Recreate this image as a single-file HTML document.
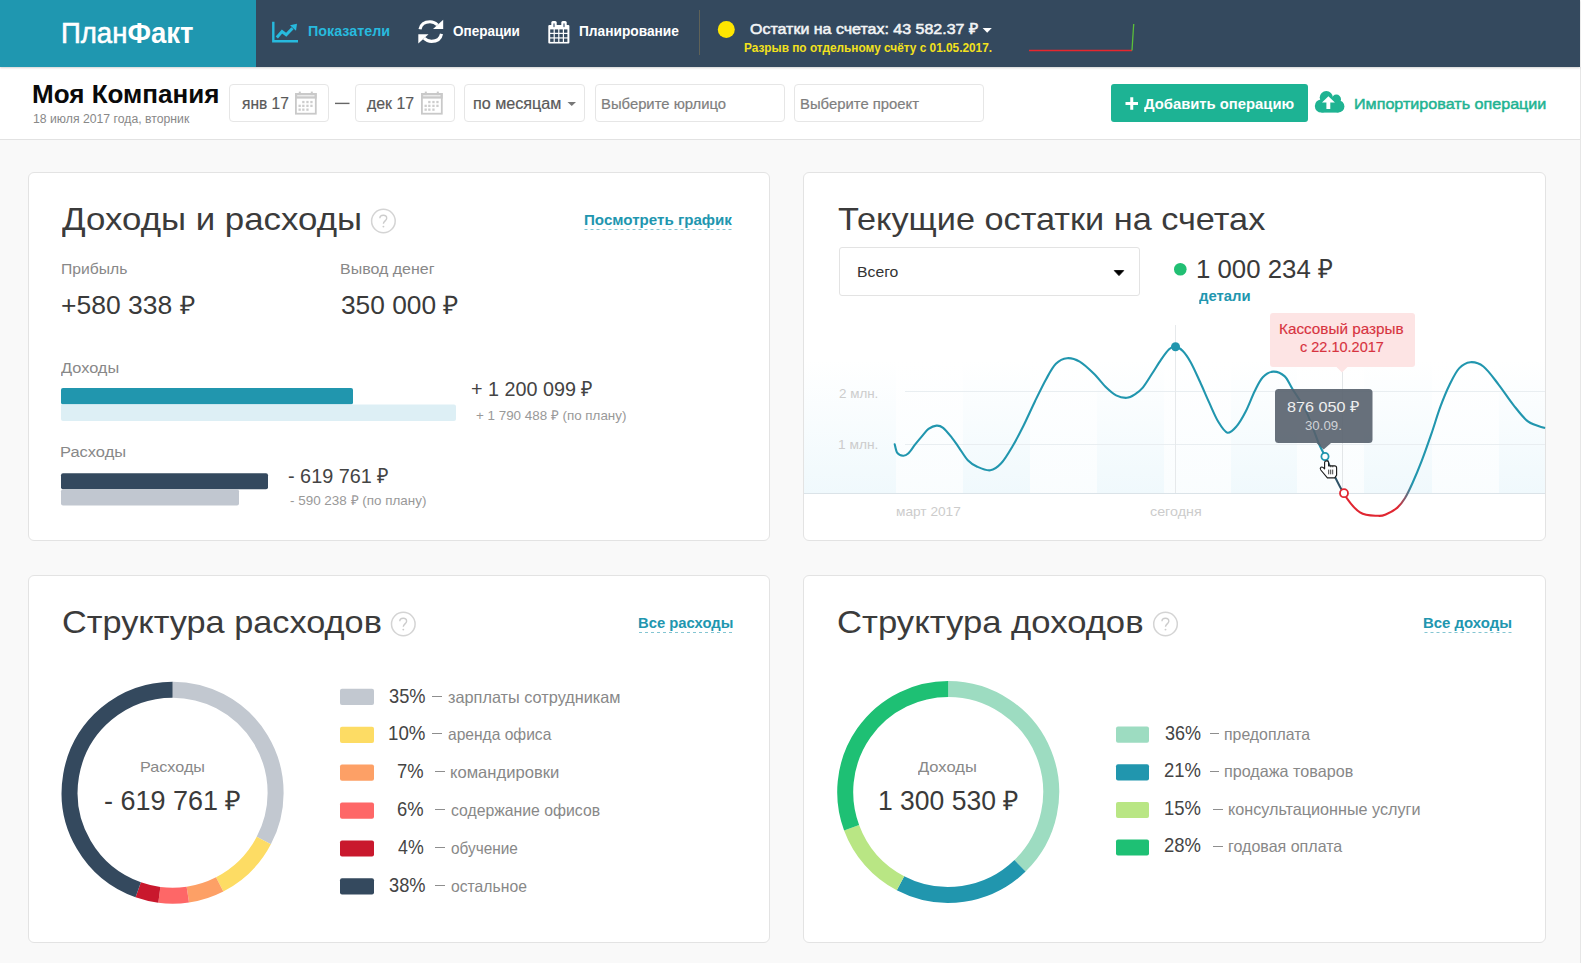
<!DOCTYPE html>
<html lang="ru">
<head>
<meta charset="utf-8">
<title>ПланФакт — Показатели</title>
<style>
*{box-sizing:border-box;margin:0;padding:0}
html,body{width:1581px;height:963px;overflow:hidden}
body{background:#f9f9f9;font-family:"Liberation Sans",sans-serif;position:relative}
.t{position:absolute;white-space:nowrap;line-height:0;transform-origin:0 0;font-family:"Liberation Sans",sans-serif}
.abs{position:absolute}
.header{position:absolute;left:0;top:0;width:1580px;height:67px;background:#34495e;box-shadow:0 1px 2px rgba(0,0,0,.18);z-index:2}
.logo{position:absolute;left:0;top:0;width:256px;height:67px;background:#1f97b0}
.sub{position:absolute;left:0;top:67px;width:1580px;height:73px;background:#fff;border-bottom:1px solid #e2e2e2}
.box{position:absolute;top:84px;height:38px;background:#fff;border:1px solid #e6e6e6;border-radius:4px}
.btn{position:absolute;left:1111px;top:84px;width:197px;height:38px;background:#1db394;border-radius:3px}
.card{position:absolute;background:#fff;border:1px solid #e3e3e3;border-radius:6px}
.rline{position:absolute;left:1580px;top:67px;width:1px;height:896px;background:#e6e6e6}
svg{position:absolute;left:0;top:0;overflow:visible}
</style>
</head>
<body>
<div class="header"><div class="logo"></div></div>
<div class="sub"></div>
<div class="rline"></div>

<div class="box" style="left:229px;width:100px"></div>
<div class="box" style="left:355px;width:100px"></div>
<div class="box" style="left:464px;width:121px"></div>
<div class="box" style="left:595px;width:190px"></div>
<div class="box" style="left:794px;width:190px"></div>
<div class="btn"></div>

<div class="card" style="left:28px;top:172px;width:742px;height:369px"></div>
<div class="card" style="left:803px;top:172px;width:743px;height:369px"></div>
<div class="card" style="left:28px;top:575px;width:742px;height:368px"></div>
<div class="card" style="left:803px;top:575px;width:743px;height:368px"></div>

<!-- select in card 2 -->
<div class="abs" style="left:839px;top:247px;width:301px;height:49px;border:1px solid #e3e3e3;border-radius:3px;background:#fff"></div>

<svg width="1581" height="963" viewBox="0 0 1581 963" style="z-index:3">
<defs>
  <linearGradient id="bandA" x1="0" y1="0" x2="0" y2="1">
    <stop offset="0" stop-color="#e6f5fb" stop-opacity="0"/>
    <stop offset="1" stop-color="#e6f5fb" stop-opacity="0.6"/>
  </linearGradient>
  <linearGradient id="bandB" x1="0" y1="0" x2="0" y2="1">
    <stop offset="0" stop-color="#e6f5fb" stop-opacity="0"/>
    <stop offset="1" stop-color="#e6f5fb" stop-opacity="0.22"/>
  </linearGradient>
  <linearGradient id="lineGrad" gradientUnits="userSpaceOnUse" x1="880" y1="0" x2="1560" y2="0">
    <stop offset="0" stop-color="#2196ae"/>
    <stop offset="0.6537" stop-color="#2196ae"/>
    <stop offset="0.6559" stop-color="#2a5e74"/>
    <stop offset="0.6809" stop-color="#2f4d62"/>
    <stop offset="0.6838" stop-color="#e02631"/>
    <stop offset="0.7618" stop-color="#e02631"/>
    <stop offset="0.7824" stop-color="#2196ae"/>
    <stop offset="1" stop-color="#2196ae"/>
  </linearGradient>
  <clipPath id="cTeal1"><rect x="880" y="300" width="445" height="240"/></clipPath>
  <clipPath id="cNavy"><rect x="1325" y="300" width="19" height="240"/></clipPath>
  <clipPath id="cRed"><rect x="1344" y="300" width="61" height="240"/></clipPath>
  <clipPath id="cTeal2"><rect x="1405" y="300" width="160" height="240"/></clipPath>
</defs>

<!-- ===== header icons ===== -->
<!-- chart icon -->
<g fill="none" stroke="#27bade">
  <path d="M273.3,21.8 V41.2 H298" stroke-width="2.4"/>
  <path d="M276.8,37.4 L282,31.5 L286.2,34.8 L292.5,28.2" stroke-width="3"/>
</g>
<path d="M290,25.2 L297,23.8 L296,30.8 Z" fill="#27bade"/>
<!-- refresh icon -->
<g fill="none" stroke="#fff" stroke-width="3.1">
  <path d="M420,29.3 C421,24 425,21.8 430,21.8 C433,21.8 435.5,23 437.5,25"/>
  <path d="M441.5,33.9 C440.5,39.2 436.5,41.4 431.5,41.4 C428.5,41.4 426,40.2 424,38.2"/>
</g>
<path d="M433,29 L443.2,29 L443.2,19.8 Z" fill="#fff"/>
<path d="M428.5,34.2 L418.3,34.2 L418.3,43.4 Z" fill="#fff"/>
<!-- calendar icon -->
<rect x="548.3" y="25" width="21.1" height="18.6" rx="1" fill="#fff"/>
<rect x="551.3" y="21" width="5.4" height="7.5" rx="1.5" fill="#fff"/>
<rect x="561.3" y="21" width="5.4" height="7.5" rx="1.5" fill="#fff"/>
<rect x="553" y="23.2" width="2" height="4" rx="0.8" fill="#8d9aab"/>
<rect x="563" y="23.2" width="2" height="4" rx="0.8" fill="#8d9aab"/>
<g fill="#34495e">
  <rect x="550.2" y="29.4" width="3.4" height="3.37"/><rect x="554.8" y="29.4" width="3.4" height="3.37"/><rect x="559.4" y="29.4" width="3.4" height="3.37"/><rect x="564" y="29.4" width="3.4" height="3.37"/>
  <rect x="550.2" y="33.97" width="3.4" height="3.37"/><rect x="554.8" y="33.97" width="3.4" height="3.37"/><rect x="559.4" y="33.97" width="3.4" height="3.37"/><rect x="564" y="33.97" width="3.4" height="3.37"/>
  <rect x="550.2" y="38.54" width="3.4" height="3.37"/><rect x="554.8" y="38.54" width="3.4" height="3.37"/><rect x="559.4" y="38.54" width="3.4" height="3.37"/><rect x="564" y="38.54" width="3.4" height="3.37"/>
</g>
<!-- divider -->
<rect x="699" y="10" width="1" height="45" fill="#5f6258"/>
<!-- yellow dot -->
<circle cx="726.3" cy="29.5" r="8.5" fill="#ffe600"/>
<!-- white caret -->
<path d="M982.6,28 H991.8 L987.2,32.8 Z" fill="#fff"/>
<!-- sparkline -->
<path d="M1029,50.5 H1132" stroke="#e8262e" stroke-width="1.6" fill="none"/>
<path d="M1132,50.5 L1133.7,24" stroke="#5bbf3a" stroke-width="1.3" fill="none"/>

<!-- ===== subheader icons ===== -->
<rect x="295.9" y="93.9" width="19.9" height="19.8" fill="none" stroke="#c9c9c9" stroke-width="1.8"/>
<rect x="295.0" y="93" width="21.7" height="5.6" fill="#c9c9c9"/>
<rect x="297.2" y="95.1" width="17.3" height="1.3" fill="#efefef"/>
<rect x="298.8" y="91.6" width="2" height="3.5" fill="#c9c9c9"/><rect x="310.8" y="91.6" width="2" height="3.5" fill="#c9c9c9"/>
<rect x="302.2" y="100.9" width="2.3" height="2.3" fill="#cdcdcd"/><rect x="306.3" y="100.9" width="2.3" height="2.3" fill="#cdcdcd"/><rect x="310.3" y="100.9" width="2.3" height="2.3" fill="#cdcdcd"/><rect x="298.5" y="104.7" width="2.3" height="2.3" fill="#cdcdcd"/><rect x="302.2" y="104.7" width="2.3" height="2.3" fill="#cdcdcd"/><rect x="306.3" y="104.7" width="2.3" height="2.3" fill="#cdcdcd"/><rect x="310.3" y="104.7" width="2.3" height="2.3" fill="#cdcdcd"/><rect x="298.5" y="108.5" width="2.3" height="2.3" fill="#cdcdcd"/><rect x="302.2" y="108.5" width="2.3" height="2.3" fill="#cdcdcd"/><rect x="306.3" y="108.5" width="2.3" height="2.3" fill="#cdcdcd"/>
<rect x="421.9" y="93.9" width="19.9" height="19.8" fill="none" stroke="#c9c9c9" stroke-width="1.8"/>
<rect x="421.0" y="93" width="21.7" height="5.6" fill="#c9c9c9"/>
<rect x="423.2" y="95.1" width="17.3" height="1.3" fill="#efefef"/>
<rect x="424.8" y="91.6" width="2" height="3.5" fill="#c9c9c9"/><rect x="436.8" y="91.6" width="2" height="3.5" fill="#c9c9c9"/>
<rect x="428.2" y="100.9" width="2.3" height="2.3" fill="#cdcdcd"/><rect x="432.3" y="100.9" width="2.3" height="2.3" fill="#cdcdcd"/><rect x="436.3" y="100.9" width="2.3" height="2.3" fill="#cdcdcd"/><rect x="424.5" y="104.7" width="2.3" height="2.3" fill="#cdcdcd"/><rect x="428.2" y="104.7" width="2.3" height="2.3" fill="#cdcdcd"/><rect x="432.3" y="104.7" width="2.3" height="2.3" fill="#cdcdcd"/><rect x="436.3" y="104.7" width="2.3" height="2.3" fill="#cdcdcd"/><rect x="424.5" y="108.5" width="2.3" height="2.3" fill="#cdcdcd"/><rect x="428.2" y="108.5" width="2.3" height="2.3" fill="#cdcdcd"/><rect x="432.3" y="108.5" width="2.3" height="2.3" fill="#cdcdcd"/>
<!-- dash between dates -->
<rect x="335" y="102.7" width="14.5" height="1.4" fill="#666"/>
<!-- caret по месяцам -->
<path d="M567.5,102 H576 L571.75,106 Z" fill="#777"/>
<!-- plus in button -->
<path d="M1125.5,103.5 H1138 M1131.75,97.2 V109.8" stroke="#fff" stroke-width="3" fill="none"/>
<!-- cloud upload -->
<g fill="#1fb392">
  <circle cx="1326.3" cy="97.6" r="6.6"/>
  <circle cx="1336.4" cy="99.2" r="4.6"/>
  <circle cx="1321.4" cy="106" r="6.6"/>
  <circle cx="1338.3" cy="106.4" r="6.1"/>
  <rect x="1321.4" y="100" width="17" height="12.6"/>
</g>
<path d="M1328.4,96.2 L1334.9,102.6 H1330.3 V108.9 H1326.4 V102.6 H1322 Z" fill="#fff"/>
<!-- ===== card 1 ===== -->
<g transform="translate(0.0,0)"><circle cx="383.4" cy="221" r="11.8" fill="none" stroke="#d4d4d4" stroke-width="1.5"/>
<path d="M379.9,218.3 C379.9,216.2 381.5,215.3 383.3,215.3 C385.3,215.3 386.7,216.5 386.7,218.2 C386.7,220.6 383.4,221.2 383.4,223.8" fill="none" stroke="#cccccc" stroke-width="1.4"/>
<circle cx="383.4" cy="226.6" r="0.95" fill="#cccccc"/></g>
<path d="M584.5,229.5 H732.5" stroke="#2196af" stroke-width="1" stroke-dasharray="3,3" opacity="0.55"/>
<rect x="61" y="388" width="292" height="16.5" rx="2" fill="#2196ae"/>
<rect x="61" y="404.5" width="395" height="16.5" rx="2" fill="#ddeff5"/>
<rect x="61" y="404.5" width="291.5" height="2" fill="#ddeff5"/>
<rect x="61" y="473.3" width="207" height="16" rx="2" fill="#34495e"/>
<rect x="61" y="489.3" width="178" height="16.3" rx="2" fill="#c1c7d0"/>

<!-- ===== card 2 chart ===== -->
<path d="M1114.3,270.6 H1123.7 L1119,275.6 Z" fill="#000" stroke="#000" stroke-width="0.9" stroke-linejoin="round"/>
<circle cx="1180.3" cy="269.2" r="6.3" fill="#21bf73"/>
<path d="M1199,305.5 H1250.5" stroke="#2196af" stroke-width="1" stroke-dasharray="3,3" opacity="0"/>
<!-- bands -->
<g>
  <rect x="804" y="360" width="92" height="133" fill="url(#bandA)"/>
  <rect x="896" y="360" width="67" height="133" fill="url(#bandB)"/>
  <rect x="963" y="360" width="67" height="133" fill="url(#bandA)"/>
  <rect x="1030" y="360" width="67" height="133" fill="url(#bandB)"/>
  <rect x="1097" y="360" width="67" height="133" fill="url(#bandA)"/>
  <rect x="1164" y="360" width="67" height="133" fill="url(#bandB)"/>
  <rect x="1231" y="360" width="66" height="133" fill="url(#bandA)"/>
  <rect x="1297" y="360" width="67" height="133" fill="url(#bandB)"/>
  <rect x="1364" y="360" width="68" height="133" fill="url(#bandA)"/>
  <rect x="1432" y="360" width="67" height="133" fill="url(#bandB)"/>
  <rect x="1499" y="360" width="46" height="133" fill="url(#bandA)"/>
</g>
<path d="M905,391.5 H1545 M905,444.5 H1545" stroke="#e9eef1" stroke-width="1"/>
<path d="M804,493.5 H1545" stroke="#dbe3e8" stroke-width="1"/>
<path d="M1175.5,325 V493" stroke="#e6e9eb" stroke-width="1"/>
<path d="M1342.5,372 V493" stroke="#e3e6e8" stroke-width="1"/>
<!-- curve -->
<path fill="none" stroke-width="2.1" stroke-linecap="round" stroke="url(#lineGrad)" d="M894.70,444.20 C895.13,445.65 895.90,450.97 897.30,452.90 C898.70,454.83 901.28,455.68 903.10,455.80 C904.92,455.92 906.15,455.53 908.20,453.60 C910.25,451.67 912.98,447.23 915.40,444.20 C917.82,441.17 920.52,437.95 922.70,435.40 C924.88,432.85 926.20,430.53 928.50,428.90 C930.80,427.27 934.07,425.78 936.50,425.60 C938.93,425.42 940.55,425.80 943.10,427.80 C945.65,429.80 949.13,434.27 951.80,437.60 C954.47,440.93 956.43,444.03 959.10,447.80 C961.77,451.57 964.78,457.05 967.80,460.20 C970.82,463.35 973.45,465.02 977.20,466.70 C980.95,468.38 986.30,470.87 990.30,470.30 C994.30,469.73 997.52,467.27 1001.20,463.30 C1004.88,459.33 1008.67,452.80 1012.40,446.50 C1016.13,440.20 1019.87,432.97 1023.60,425.50 C1027.33,418.03 1031.05,409.42 1034.80,401.70 C1038.55,393.98 1042.58,385.52 1046.10,379.20 C1049.62,372.88 1052.40,367.30 1055.90,363.80 C1059.40,360.30 1063.13,358.55 1067.10,358.20 C1071.07,357.85 1075.27,359.13 1079.70,361.70 C1084.13,364.27 1089.27,369.28 1093.70,373.60 C1098.13,377.92 1102.57,383.97 1106.30,387.60 C1110.03,391.23 1112.67,393.70 1116.10,395.40 C1119.53,397.10 1123.77,397.97 1126.90,397.80 C1130.03,397.63 1132.25,396.10 1134.90,394.40 C1137.55,392.70 1139.95,391.03 1142.80,387.60 C1145.65,384.17 1148.95,378.47 1152.00,373.80 C1155.05,369.13 1158.25,363.68 1161.10,359.60 C1163.95,355.52 1166.72,351.47 1169.10,349.30 C1171.48,347.13 1173.12,346.32 1175.40,346.60 C1177.68,346.88 1180.23,348.37 1182.80,351.00 C1185.37,353.63 1187.93,357.27 1190.80,362.40 C1193.67,367.53 1196.95,375.13 1200.00,381.80 C1203.05,388.47 1206.05,395.73 1209.10,402.40 C1212.15,409.07 1215.25,416.75 1218.30,421.80 C1221.35,426.85 1224.37,431.93 1227.40,432.70 C1230.43,433.47 1233.45,429.93 1236.50,426.40 C1239.55,422.87 1242.65,417.40 1245.70,411.50 C1248.75,405.60 1251.95,396.70 1254.80,391.00 C1257.65,385.30 1259.75,380.53 1262.80,377.30 C1265.85,374.07 1269.48,371.80 1273.10,371.60 C1276.72,371.40 1281.27,373.20 1284.50,376.10 C1287.73,379.00 1288.88,383.12 1292.50,389.00 C1296.12,394.88 1301.92,402.57 1306.20,411.40 C1310.48,420.23 1315.05,434.53 1318.20,442.00 C1321.35,449.47 1320.87,447.67 1325.10,456.20 C1329.33,464.73 1337.78,483.83 1343.60,493.20 C1349.42,502.57 1354.23,508.63 1360.00,512.40 C1365.77,516.17 1373.83,515.50 1378.20,515.80 C1382.57,516.10 1383.00,515.57 1386.20,514.20 C1389.40,512.83 1394.28,510.25 1397.40,507.60 C1400.52,504.95 1402.40,502.35 1404.90,498.30 C1407.40,494.25 1409.60,489.53 1412.40,483.30 C1415.20,477.07 1418.58,469.00 1421.70,460.90 C1424.82,452.80 1427.98,443.73 1431.10,434.70 C1434.22,425.67 1437.28,415.10 1440.40,406.70 C1443.52,398.30 1446.68,390.68 1449.80,384.30 C1452.92,377.92 1455.68,372.08 1459.10,368.40 C1462.52,364.72 1466.25,362.52 1470.30,362.20 C1474.35,361.88 1478.72,362.82 1483.40,366.50 C1488.08,370.18 1493.42,377.92 1498.40,384.30 C1503.38,390.68 1508.32,398.57 1513.30,404.80 C1518.28,411.03 1523.15,417.87 1528.30,421.70 C1533.45,425.53 1541.55,426.78 1544.20,427.80"/>
<circle cx="1175.5" cy="346.8" r="4.5" fill="#2196ae"/>
<circle cx="1325" cy="456.5" r="3.6" fill="#fff" stroke="#2196ae" stroke-width="1.8"/>
<circle cx="1344" cy="493.2" r="4" fill="#fff" stroke="#e02631" stroke-width="1.8"/>
<!-- red tooltip -->
<rect x="1270" y="313" width="145" height="54" rx="3" fill="#fde4e4"/>
<path d="M1336,366.5 L1342,372.5 L1348,366.5 Z" fill="#fde4e4"/>
<!-- dark tooltip -->
<rect x="1275" y="389" width="97.5" height="54" rx="3.5" fill="#56606d" fill-opacity="0.9"/>
<path d="M1316.5,443 L1323.7,449.5 L1331,443 Z" fill="#56606d" fill-opacity="0.9"/>
<!-- hand cursor -->
<path d="M1324.6,462.5 Q1324.6,460.8 1326.6,460.8 Q1328.6,460.8 1328.6,462.5 V465.8 L1334.6,465.8 Q1336.6,465.8 1336.6,467.8 V475.2 L1334.8,477.8 H1327.4 L1320.8,470 Q1319.6,468.3 1321,467.2 Q1322.5,466.3 1324.6,468.8 Z" fill="#fff" stroke="#1c1c1c" stroke-width="1.15" stroke-linejoin="round"/>
<path d="M1328.7,469.6 V474.3 M1330.7,469.6 V474.3 M1332.7,469.6 V474.3 M1330.8,465.9 V467.3 M1332.8,465.9 V467.3" stroke="#222" stroke-width="0.85"/>

<!-- ===== card 3 ===== -->
<g transform="translate(19.900000000000034,403)"><circle cx="383.4" cy="221" r="11.8" fill="none" stroke="#d4d4d4" stroke-width="1.5"/>
<path d="M379.9,218.3 C379.9,216.2 381.5,215.3 383.3,215.3 C385.3,215.3 386.7,216.5 386.7,218.2 C386.7,220.6 383.4,221.2 383.4,223.8" fill="none" stroke="#cccccc" stroke-width="1.4"/>
<circle cx="383.4" cy="226.6" r="0.95" fill="#cccccc"/></g>
<path d="M639,632.5 H732.5" stroke="#2196af" stroke-width="1" stroke-dasharray="3,3" opacity="0.55"/>
<path d="M172.60,689.70 A103,103 0 0 1 263.80,840.58" fill="none" stroke="#c2c8d0" stroke-width="16"/>
<path d="M263.80,840.58 A103,103 0 0 1 219.68,884.31" fill="none" stroke="#fddc64" stroke-width="16"/>
<path d="M219.68,884.31 A103,103 0 0 1 187.82,894.57" fill="none" stroke="#fda066" stroke-width="16"/>
<path d="M187.82,894.57 A103,103 0 0 1 159.33,894.84" fill="none" stroke="#fe6767" stroke-width="16"/>
<path d="M159.33,894.84 A103,103 0 0 1 138.22,889.79" fill="none" stroke="#c9182d" stroke-width="16"/>
<path d="M138.22,889.79 A103,103 0 0 1 172.60,689.70" fill="none" stroke="#34495e" stroke-width="16"/>
<g>
  <rect x="340" y="688.8" width="34" height="16.2" rx="2" fill="#c2c8d0"/>
  <rect x="340" y="726.7" width="34" height="16.2" rx="2" fill="#fddc64"/>
  <rect x="340" y="764.6" width="34" height="16.2" rx="2" fill="#fda066"/>
  <rect x="340" y="802.5" width="34" height="16.2" rx="2" fill="#fe6767"/>
  <rect x="340" y="840.4" width="34" height="16.2" rx="2" fill="#c9182d"/>
  <rect x="340" y="878.3" width="34" height="16.2" rx="2" fill="#34495e"/>
</g>

<!-- ===== card 4 ===== -->
<g transform="translate(782.1,403)"><circle cx="383.4" cy="221" r="11.8" fill="none" stroke="#d4d4d4" stroke-width="1.5"/>
<path d="M379.9,218.3 C379.9,216.2 381.5,215.3 383.3,215.3 C385.3,215.3 386.7,216.5 386.7,218.2 C386.7,220.6 383.4,221.2 383.4,223.8" fill="none" stroke="#cccccc" stroke-width="1.4"/>
<circle cx="383.4" cy="226.6" r="0.95" fill="#cccccc"/></g>
<path d="M1424.5,632.5 H1512" stroke="#2196af" stroke-width="1" stroke-dasharray="3,3" opacity="0.55"/>
<path d="M948.20,689.00 A103,103 0 0 1 1020.01,865.84" fill="none" stroke="#9ddcc1" stroke-width="16"/>
<path d="M1020.01,865.84 A103,103 0 0 1 900.48,883.28" fill="none" stroke="#2196ae" stroke-width="16"/>
<path d="M900.48,883.28 A103,103 0 0 1 851.60,827.73" fill="none" stroke="#b9e684" stroke-width="16"/>
<path d="M851.60,827.73 A103,103 0 0 1 948.20,689.00" fill="none" stroke="#1ec074" stroke-width="16"/>
<g>
  <rect x="1116" y="726.6" width="33" height="16.2" rx="2" fill="#9ddcc1"/>
  <rect x="1116" y="764.3" width="33" height="16.2" rx="2" fill="#2196ae"/>
  <rect x="1116" y="801.9" width="33" height="16.2" rx="2" fill="#b9e684"/>
  <rect x="1116" y="839.4" width="33" height="16.2" rx="2" fill="#1ec074"/>
</g>
</svg>

<div style="position:absolute;left:0;top:0;z-index:4">
<span class="t" style="left:307.84px;top:30.50px;font-size:15px;color:#27bade;transform:scaleX(0.9553);font-weight:bold;">Показатели</span>
<span class="t" style="left:453.30px;top:30.50px;font-size:15px;color:#ffffff;transform:scaleX(0.9011);font-weight:bold;">Операции</span>
<span class="t" style="left:578.89px;top:30.50px;font-size:15px;color:#ffffff;transform:scaleX(0.9147);font-weight:bold;">Планирование</span>
<span class="t" style="left:749.50px;top:28.50px;font-size:15.5px;color:#f2f4f6;transform:scaleX(1.0313);-webkit-text-stroke:0.55px #f2f4f6;">Остатки на счетах: 43 582.37 ₽</span>
<span class="t" style="left:744.00px;top:48.00px;font-size:12.5px;color:#f3e11c;transform:scaleX(0.9464);font-weight:bold;">Разрыв по отдельному счёту с 01.05.2017.</span>
<span class="t" style="left:32.32px;top:94.00px;font-size:26.5px;color:#0a0a0a;transform:scaleX(0.9820);font-weight:bold;">Моя Компания</span>
<span class="t" style="left:33.00px;top:119.00px;font-size:12.5px;color:#888888;transform:scaleX(0.9790);">18 июля 2017 года, вторник</span>
<span class="t" style="left:241.60px;top:103.50px;font-size:16px;color:#595959;transform:scaleX(0.9701);-webkit-text-stroke:0.2px #595959;">янв 17</span>
<span class="t" style="left:367.10px;top:103.50px;font-size:16px;color:#595959;transform:scaleX(0.9900);-webkit-text-stroke:0.2px #595959;">дек 17</span>
<span class="t" style="left:472.59px;top:103.50px;font-size:16px;color:#595959;transform:scaleX(1.0090);-webkit-text-stroke:0.2px #595959;">по месяцам</span>
<span class="t" style="left:600.71px;top:103.50px;font-size:15px;color:#7e7e7e;transform:scaleX(0.9887);-webkit-text-stroke:0.2px #7e7e7e;">Выберите юрлицо</span>
<span class="t" style="left:799.61px;top:103.50px;font-size:15px;color:#7e7e7e;transform:scaleX(0.9902);-webkit-text-stroke:0.2px #7e7e7e;">Выберите проект</span>
<span class="t" style="left:1143.60px;top:103.50px;font-size:15.5px;color:#ffffff;transform:scaleX(0.9549);font-weight:bold;">Добавить операцию</span>
<span class="t" style="left:1353.56px;top:103.50px;font-size:15.5px;color:#1fb392;transform:scaleX(1.0397);-webkit-text-stroke:0.5px #1fb392;">Импортировать операции</span>
<span class="t" style="left:62.30px;top:219.00px;font-size:32px;color:#3b3b3b;transform:scaleX(1.0891);">Доходы и расходы</span>
<span class="t" style="left:583.59px;top:219.50px;font-size:15px;color:#2196af;transform:scaleX(1.0078);font-weight:bold;">Посмотреть график</span>
<span class="t" style="left:60.99px;top:268.50px;font-size:15.5px;color:#888888;transform:scaleX(1.0127);">Прибыль</span>
<span class="t" style="left:339.87px;top:268.50px;font-size:15.5px;color:#888888;transform:scaleX(1.0306);">Вывод денег</span>
<span class="t" style="left:60.96px;top:305.00px;font-size:25.5px;color:#3a3a3a;transform:scaleX(1.0381);">+580 338 ₽</span>
<span class="t" style="left:341.00px;top:305.00px;font-size:25.5px;color:#3a3a3a;transform:scaleX(1.0312);">350 000 ₽</span>
<span class="t" style="left:61.40px;top:367.50px;font-size:15.5px;color:#888888;transform:scaleX(1.0542);">Доходы</span>
<span class="t" style="left:471.06px;top:388.50px;font-size:21px;color:#444444;transform:scaleX(0.9404);">+ 1 200 099 ₽</span>
<span class="t" style="left:475.80px;top:415.50px;font-size:13.5px;color:#999999;transform:scaleX(0.9917);">+ 1 790 488 ₽ (по плану)</span>
<span class="t" style="left:59.94px;top:451.50px;font-size:15.5px;color:#888888;transform:scaleX(1.0623);">Расходы</span>
<span class="t" style="left:288.30px;top:475.50px;font-size:21px;color:#444444;transform:scaleX(0.9440);">- 619 761 ₽</span>
<span class="t" style="left:289.80px;top:500.50px;font-size:13.5px;color:#999999;transform:scaleX(0.9955);">- 590 238 ₽ (по плану)</span>
<span class="t" style="left:838.00px;top:219.00px;font-size:32px;color:#3b3b3b;transform:scaleX(1.0712);">Текущие остатки на счетах</span>
<span class="t" style="left:856.68px;top:271.50px;font-size:15.5px;color:#333333;transform:scaleX(1.0174);">Всего</span>
<span class="t" style="left:1196.35px;top:269.00px;font-size:26.5px;color:#3a3a3a;transform:scaleX(0.9736);">1 000 234 ₽</span>
<span class="t" style="left:1199.00px;top:295.50px;font-size:15px;color:#2196af;transform:scaleX(0.9907);font-weight:bold;">детали</span>
<span class="t" style="left:839.40px;top:393.50px;font-size:13.5px;color:#cccccc;transform:scaleX(0.9930);">2 млн.</span>
<span class="t" style="left:838.38px;top:444.50px;font-size:13.5px;color:#cccccc;transform:scaleX(1.0192);">1 млн.</span>
<span class="t" style="left:895.50px;top:511.50px;font-size:13.5px;color:#cccccc;transform:scaleX(1.0133);">март 2017</span>
<span class="t" style="left:1149.70px;top:511.50px;font-size:13.5px;color:#cccccc;transform:scaleX(1.0593);">сегодня</span>
<span class="t" style="left:1279.35px;top:329.00px;font-size:14.5px;color:#d7333f;transform:scaleX(1.0528);-webkit-text-stroke:0.15px #d7333f;">Кассовый разрыв</span>
<span class="t" style="left:1300.00px;top:347.00px;font-size:14.5px;color:#d7333f;transform:scaleX(1.0002);-webkit-text-stroke:0.15px #d7333f;">с 22.10.2017</span>
<span class="t" style="left:1287.00px;top:406.50px;font-size:15.5px;color:#eeeeee;transform:scaleX(1.0442);">876 050 ₽</span>
<span class="t" style="left:1304.60px;top:425.50px;font-size:13.5px;color:#cfd2d6;transform:scaleX(0.9814);">30.09.</span>
<span class="t" style="left:62.23px;top:622.00px;font-size:32px;color:#3b3b3b;transform:scaleX(1.0715);">Структура расходов</span>
<span class="t" style="left:637.71px;top:622.50px;font-size:15px;color:#2196af;transform:scaleX(0.9875);font-weight:bold;">Все расходы</span>
<span class="t" style="left:139.98px;top:767.00px;font-size:14.5px;color:#888888;transform:scaleX(1.1162);">Расходы</span>
<span class="t" style="left:104.10px;top:801.00px;font-size:27px;color:#3a3a3a;transform:scaleX(0.9986);">- 619 761 ₽</span>
<span class="t" style="left:388.70px;top:695.50px;font-size:21px;color:#444444;transform:scaleX(0.8680);">35%</span>
<span class="t" style="left:447.50px;top:697.00px;font-size:16.5px;color:#888888;transform:scaleX(0.9868);">зарплаты сотрудникам</span>
<span class="t" style="left:387.81px;top:732.50px;font-size:21px;color:#444444;transform:scaleX(0.8895);">10%</span>
<span class="t" style="left:447.50px;top:734.00px;font-size:16.5px;color:#888888;transform:scaleX(0.9442);">аренда офиса</span>
<span class="t" style="left:397.12px;top:770.50px;font-size:21px;color:#444444;transform:scaleX(0.8752);">7%</span>
<span class="t" style="left:450.29px;top:772.00px;font-size:16.5px;color:#888888;transform:scaleX(1.0056);">командировки</span>
<span class="t" style="left:397.12px;top:808.50px;font-size:21px;color:#444444;transform:scaleX(0.8752);">6%</span>
<span class="t" style="left:451.30px;top:810.00px;font-size:16.5px;color:#888888;transform:scaleX(0.9564);">содержание офисов</span>
<span class="t" style="left:398.00px;top:846.50px;font-size:21px;color:#444444;transform:scaleX(0.8457);">4%</span>
<span class="t" style="left:451.30px;top:848.00px;font-size:16.5px;color:#888888;transform:scaleX(0.9314);">обучение</span>
<span class="t" style="left:388.70px;top:884.50px;font-size:21px;color:#444444;transform:scaleX(0.8680);">38%</span>
<span class="t" style="left:451.30px;top:886.00px;font-size:16.5px;color:#888888;transform:scaleX(0.9524);">остальное</span>
<span class="t" style="left:836.72px;top:622.00px;font-size:32px;color:#3b3b3b;transform:scaleX(1.0832);">Структура доходов</span>
<span class="t" style="left:1423.40px;top:622.50px;font-size:15px;color:#2196af;transform:scaleX(0.9971);font-weight:bold;">Все доходы</span>
<span class="t" style="left:917.70px;top:767.00px;font-size:14.5px;color:#888888;transform:scaleX(1.1392);">Доходы</span>
<span class="t" style="left:878.04px;top:801.00px;font-size:27px;color:#3a3a3a;transform:scaleX(0.9814);">1 300 530 ₽</span>
<span class="t" style="left:1164.50px;top:732.50px;font-size:21px;color:#444444;transform:scaleX(0.8584);">36%</span>
<span class="t" style="left:1224.34px;top:734.00px;font-size:16.5px;color:#888888;transform:scaleX(0.9600);">предоплата</span>
<span class="t" style="left:1163.62px;top:769.50px;font-size:21px;color:#444444;transform:scaleX(0.8796);">21%</span>
<span class="t" style="left:1224.32px;top:771.00px;font-size:16.5px;color:#888888;transform:scaleX(0.9795);">продажа товаров</span>
<span class="t" style="left:1163.62px;top:807.50px;font-size:21px;color:#444444;transform:scaleX(0.8796);">15%</span>
<span class="t" style="left:1227.52px;top:809.00px;font-size:16.5px;color:#888888;transform:scaleX(0.9800);">консультационные услуги</span>
<span class="t" style="left:1163.62px;top:844.50px;font-size:21px;color:#444444;transform:scaleX(0.8796);">28%</span>
<span class="t" style="left:1227.53px;top:846.00px;font-size:16.5px;color:#888888;transform:scaleX(0.9713);">годовая оплата</span>
<span class="t" style="left:60.76px;top:32.50px;font-size:30px;color:#fff;transform:scaleX(0.9179);"><span style="-webkit-text-stroke:0.6px #fff">План</span><b>Факт</b></span>
<div class="abs" style="left:432.2px;top:696px;width:9.8px;height:1.25px;background:#8e8e8e"></div>
<div class="abs" style="left:432.2px;top:733px;width:9.8px;height:1.25px;background:#8e8e8e"></div>
<div class="abs" style="left:435.1px;top:771px;width:9.8px;height:1.25px;background:#8e8e8e"></div>
<div class="abs" style="left:435.1px;top:809px;width:9.8px;height:1.25px;background:#8e8e8e"></div>
<div class="abs" style="left:435.1px;top:847px;width:9.8px;height:1.25px;background:#8e8e8e"></div>
<div class="abs" style="left:435.1px;top:885px;width:9.8px;height:1.25px;background:#8e8e8e"></div>
<div class="abs" style="left:1209.7px;top:733px;width:9.8px;height:1.25px;background:#8e8e8e"></div>
<div class="abs" style="left:1209.7px;top:771px;width:9.8px;height:1.25px;background:#8e8e8e"></div>
<div class="abs" style="left:1212.9px;top:809px;width:9.8px;height:1.25px;background:#8e8e8e"></div>
<div class="abs" style="left:1212.9px;top:846px;width:9.8px;height:1.25px;background:#8e8e8e"></div>
</div>
</body>
</html>
